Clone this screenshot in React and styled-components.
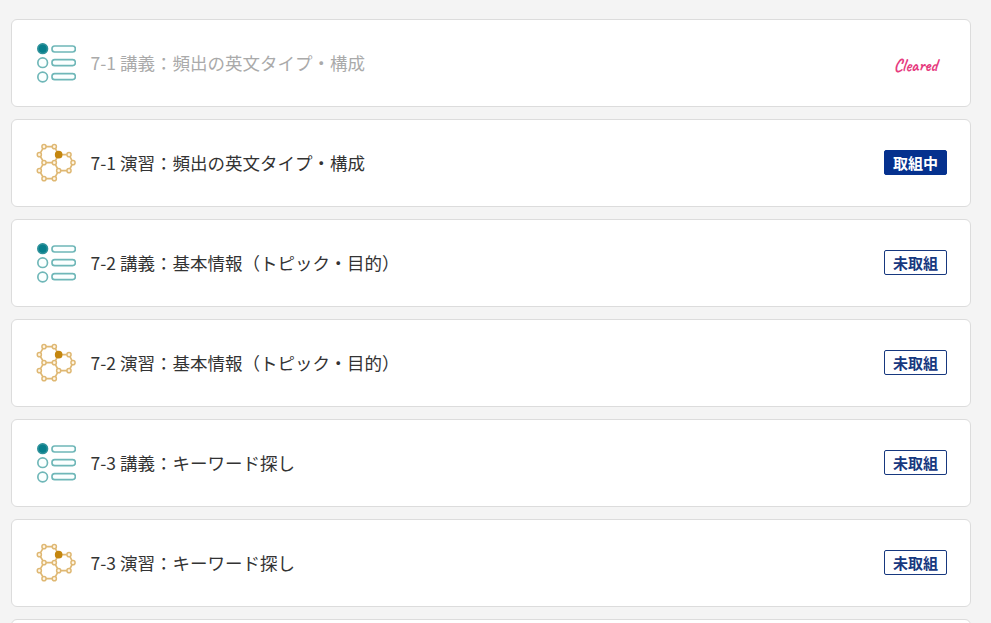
import React from "react";
import styled, { createGlobalStyle, css } from "styled-components";

const GlobalStyle = createGlobalStyle`
  * {
    box-sizing: border-box;
  }
  body {
    margin: 0;
    background: #f4f4f4;
    font-family: "Noto Sans CJK JP", sans-serif;
  }
`;

const Page = styled.main`
  height: 100vh;
  overflow: hidden;
`;

const LessonList = styled.ul`
  display: flex;
  flex-direction: column;
  gap: 12px;
  width: 960px;
  margin: 0 0 0 11px;
  padding: 19px 0 0;
  list-style: none;
`;

const LessonCard = styled.li`
  display: flex;
  align-items: center;
  height: 88px;
  padding: 0 23px 0 24px;
  background: #fff;
  border: 1px solid #dcdcdc;
  border-radius: 6px;
`;

const Icon = styled.svg`
  flex-shrink: 0;
  width: 40px;
  height: 40px;
`;

const LessonTitle = styled.span`
  flex: 1;
  margin-left: 14.5px;
  color: ${(props) => (props.$cleared ? "#aaa" : "#333")};
  font-size: 17.5px;
  line-height: 26px;
`;

const Badge = styled.span`
  width: 63px;
  height: 25px;
  margin-bottom: 2px;
  border: 1px solid #17387f;
  border-radius: 2px;
  color: #17387f;
  font-size: 15px;
  font-weight: 700;
  line-height: 24px;
  text-align: center;
  ${(props) =>
    props.$active &&
    css`
      background: #05318e;
      border-color: #05318e;
      color: #fff;
    `}
`;

const Cleared = styled.span`
  width: 63px;
  padding-top: 4px;
  color: #e63b80;
  font-family: "Caveat", "Caveat Brush", cursive;
  font-size: 17.5px;
  font-weight: 700;
  line-height: 20px;
  text-align: center;
`;

const LectureIcon = () => (
  <Icon viewBox="18 24 120 120" fill="#fbffff" stroke="#6fb7b8" strokeWidth="5">
    <circle cx="38" cy="41" r="14.5" fill="#087f8c" stroke="#2f929b" />
    <circle cx="38" cy="83" r="14.5" />
    <circle cx="38" cy="126" r="14.5" />
    <rect x="66" y="33" width="70" height="18" rx="8" />
    <rect x="66" y="74" width="70" height="18" rx="8" />
    <rect x="66" y="116" width="70" height="18" rx="8" />
  </Icon>
);

const nodes = [
  [42, 35], [73, 35], [28, 59], [42, 83], [73, 83], [117, 59], [129, 83],
  [117, 107], [86, 107], [28, 107], [42, 131], [73, 131],
];

const ExerciseIcon = () => (
  <Icon viewBox="18 24 120 120" fill="none" stroke="#dfb873" strokeWidth="5">
    <path d="M42 35H73L86 59L73 83H42L28 59Z" />
    <path d="M86 59H117L129 83L117 107H86L73 83" />
    <path d="M42 83L28 107L42 131H73L86 107" />
    {nodes.map(([x, y]) => (
      <circle key={`${x}-${y}`} cx={x} cy={y} r="6.2" fill="#fff6e6" strokeWidth="4.5" />
    ))}
    <circle cx="86" cy="59" r="11.5" fill="#c4860f" stroke="none" />
  </Icon>
);

const lessons = [
  { type: "lecture", title: "7-1 講義：頻出の英文タイプ・構成", status: "cleared" },
  { type: "exercise", title: "7-1 演習：頻出の英文タイプ・構成", status: "active" },
  { type: "lecture", title: "7-2 講義：基本情報（トピック・目的）", status: "todo" },
  { type: "exercise", title: "7-2 演習：基本情報（トピック・目的）", status: "todo" },
  { type: "lecture", title: "7-3 講義：キーワード探し", status: "todo" },
  { type: "exercise", title: "7-3 演習：キーワード探し", status: "todo" },
];

const Status = ({ status }) => {
  if (status === "cleared") return <Cleared>Cleared</Cleared>;
  if (status === "active") return <Badge $active>取組中</Badge>;
  return <Badge>未取組</Badge>;
};

const App = () => {
  return (
    <Page>
      <GlobalStyle />
      <LessonList>
        {lessons.map((lesson) => (
          <LessonCard key={lesson.title}>
            {lesson.type === "lecture" ? <LectureIcon /> : <ExerciseIcon />}
            <LessonTitle $cleared={lesson.status === "cleared"}>{lesson.title}</LessonTitle>
            <Status status={lesson.status} />
          </LessonCard>
        ))}
        <LessonCard />
      </LessonList>
    </Page>
  );
};

export default App;
